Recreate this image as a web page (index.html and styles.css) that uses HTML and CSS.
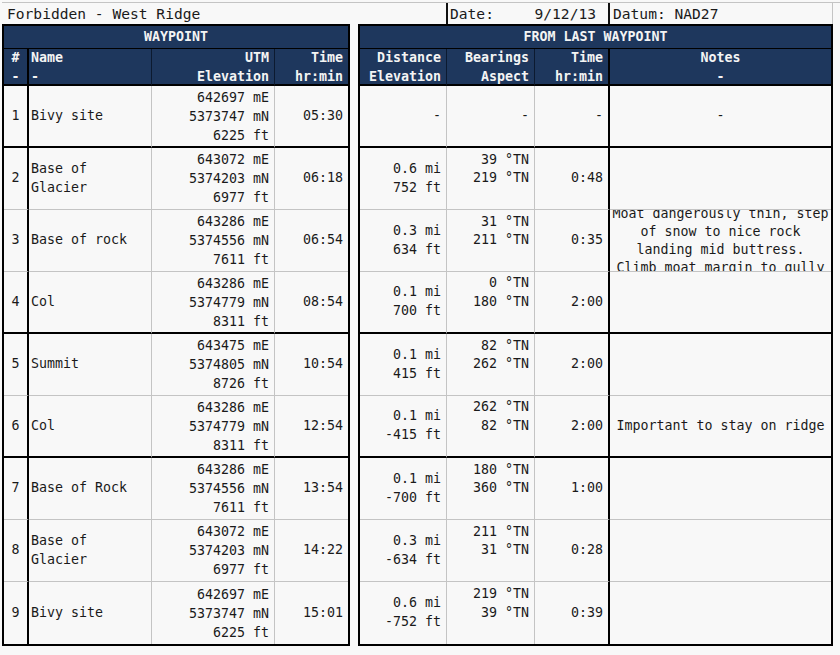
FILE: index.html
```html
<!DOCTYPE html>
<html>
<head>
<meta charset="utf-8">
<title>Forbidden - West Ridge</title>
<link rel="stylesheet" href="styles.css">
</head>
<body>
<div class="sheet">
  <div class="titlebar">
    <div class="tcell title">Forbidden - West Ridge</div>
    <div class="tcell date"><span>Date:</span><span>9/12/13</span></div>
    <div class="tcell datum">Datum: NAD27</div>
  </div>
  <div class="tables">
    <div class="grid left">
      <div class="band">WAYPOINT</div>
      <div class="h c sep2">#<br>-</div>
      <div class="h l sep1">Name<br>-</div>
      <div class="h r sep1">UTM<br>Elevation</div>
      <div class="h r">Time<br>hr:min</div>

      <div class="row thick">
        <div class="c sep2">1</div><div class="l sep1">Bivy site</div>
        <div class="r sep1 utm">642697 mE<br>5373747 mN<br>6225 ft</div><div class="r">05:30</div>
      </div>
      <div class="row">
        <div class="c sep2">2</div><div class="l sep1">Base of<br>Glacier</div>
        <div class="r sep1 utm">643072 mE<br>5374203 mN<br>6977 ft</div><div class="r">06:18</div>
      </div>
      <div class="row">
        <div class="c sep2">3</div><div class="l sep1">Base of rock</div>
        <div class="r sep1 utm">643286 mE<br>5374556 mN<br>7611 ft</div><div class="r">06:54</div>
      </div>
      <div class="row thick">
        <div class="c sep2">4</div><div class="l sep1">Col</div>
        <div class="r sep1 utm">643286 mE<br>5374779 mN<br>8311 ft</div><div class="r">08:54</div>
      </div>
      <div class="row">
        <div class="c sep2">5</div><div class="l sep1">Summit</div>
        <div class="r sep1 utm">643475 mE<br>5374805 mN<br>8726 ft</div><div class="r">10:54</div>
      </div>
      <div class="row thick">
        <div class="c sep2">6</div><div class="l sep1">Col</div>
        <div class="r sep1 utm">643286 mE<br>5374779 mN<br>8311 ft</div><div class="r">12:54</div>
      </div>
      <div class="row">
        <div class="c sep2">7</div><div class="l sep1">Base of Rock</div>
        <div class="r sep1 utm">643286 mE<br>5374556 mN<br>7611 ft</div><div class="r">13:54</div>
      </div>
      <div class="row">
        <div class="c sep2">8</div><div class="l sep1">Base of<br>Glacier</div>
        <div class="r sep1 utm">643072 mE<br>5374203 mN<br>6977 ft</div><div class="r">14:22</div>
      </div>
      <div class="row last">
        <div class="c sep2">9</div><div class="l sep1">Bivy site</div>
        <div class="r sep1 utm">642697 mE<br>5373747 mN<br>6225 ft</div><div class="r">15:01</div>
      </div>
    </div>

    <div class="grid right">
      <div class="band">FROM LAST WAYPOINT</div>
      <div class="h r sep1">Distance<br>Elevation</div>
      <div class="h r sep1">Bearings<br>Aspect</div>
      <div class="h r sep2">Time<br>hr:min</div>
      <div class="h c">Notes<br>-</div>

      <div class="row thick">
        <div class="r sep1">-</div><div class="r sep1">-</div>
        <div class="r sep2">-</div><div class="c">-</div>
      </div>
      <div class="row">
        <div class="r sep1">0.6 mi<br>752 ft</div><div class="r sep1">39 °TN<br>219 °TN<br>&nbsp;</div>
        <div class="r sep2">0:48</div><div class="c"></div>
      </div>
      <div class="row">
        <div class="r sep1">0.3 mi<br>634 ft</div><div class="r sep1">31 °TN<br>211 °TN<br>&nbsp;</div>
        <div class="r sep2">0:35</div>
        <div class="c note">Moat dangerously thin, step<br>of snow to nice rock<br>landing mid buttress.<br>Climb moat margin to gully</div>
      </div>
      <div class="row thick">
        <div class="r sep1">0.1 mi<br>700 ft</div><div class="r sep1">0 °TN<br>180 °TN<br>&nbsp;</div>
        <div class="r sep2">2:00</div><div class="c"></div>
      </div>
      <div class="row">
        <div class="r sep1">0.1 mi<br>415 ft</div><div class="r sep1">82 °TN<br>262 °TN<br>&nbsp;</div>
        <div class="r sep2">2:00</div><div class="c"></div>
      </div>
      <div class="row thick">
        <div class="r sep1">0.1 mi<br>-415 ft</div><div class="r sep1">262 °TN<br>82 °TN<br>&nbsp;</div>
        <div class="r sep2">2:00</div><div class="c">Important to stay on ridge</div>
      </div>
      <div class="row">
        <div class="r sep1">0.1 mi<br>-700 ft</div><div class="r sep1">180 °TN<br>360 °TN<br>&nbsp;</div>
        <div class="r sep2">1:00</div><div class="c"></div>
      </div>
      <div class="row">
        <div class="r sep1">0.3 mi<br>-634 ft</div><div class="r sep1">211 °TN<br>31 °TN<br>&nbsp;</div>
        <div class="r sep2">0:28</div><div class="c"></div>
      </div>
      <div class="row last">
        <div class="r sep1">0.6 mi<br>-752 ft</div><div class="r sep1">219 °TN<br>39 °TN<br>&nbsp;</div>
        <div class="r sep2">0:39</div><div class="c"></div>
      </div>
    </div>
  </div>
</div>
</body>
</html>
```

FILE: styles.css
```css
* { box-sizing: border-box; }

html, body {
  margin: 0;
  padding: 0;
  background: #f8f8f8;
}

body {
  font-family: "DejaVu Sans Mono", "Liberation Mono", monospace;
  font-size: 13.3px;
  color: #1a1a1a;
}

.sheet {
  padding: 2px 0 0 2px;
  width: 840px;
}

/* title row */
.titlebar {
  display: grid;
  grid-template-columns: 444px 162px 225px;
  height: 22px;
  border-top: 1px solid #c4c4c4;
  font-size: 14.6px;
}

.tcell {
  display: flex;
  align-items: center;
  line-height: 21px;
  white-space: nowrap;
}

.title { padding-left: 5px; }

.date {
  border-left: 2px solid #111;
  justify-content: space-between;
  padding: 0 12px 0 2px;
}

.datum {
  border-left: 2px solid #111;
  border-right: 1px solid #c4c4c4;
  padding-left: 3px;
}

/* tables */
.tables {
  display: flex;
  gap: 8px;
  align-items: flex-start;
}

.grid {
  display: grid;
  border: 2px solid #000;
  grid-template-rows: 23px 37px repeat(9, 62px);
}

.left { grid-template-columns: 25px 123px 123px 73px; }
.right { grid-template-columns: 87px 88px 75px 221px; }

.row { display: contents; }

.grid > div:not(.row),
.row > div {
  display: flex;
  flex-direction: column;
  justify-content: center;
  overflow: hidden;
  white-space: nowrap;
  line-height: 18.6px;
}

.band {
  grid-column: 1 / -1;
  background: #1e375d;
  color: #f4f4f4;
  font-weight: bold;
  text-align: center;
  border-bottom: 1px solid #000;
  line-height: 22px;
}

.h {
  background: #1e375d;
  color: #f4f4f4;
  font-weight: bold;
  border-bottom: 2px solid #000;
  line-height: 19px !important;
}

.l { text-align: left; padding-left: 2px; }
.r { text-align: right; padding-right: 5px; }
.c { text-align: center; }

.sep1 { border-right: 1px solid #c4c4c4; }
.sep2 { border-right: 2px solid #000; }
.h.sep1 { border-right-color: #0c1a30; }

.row > div { border-bottom: 1px solid #c4c4c4; }
.row.thick > div { border-bottom: 2px solid #000; }
.row.last > div { border-bottom: none; }

.utm { line-height: 19px !important; }

.note { line-height: 18px !important; }
```
